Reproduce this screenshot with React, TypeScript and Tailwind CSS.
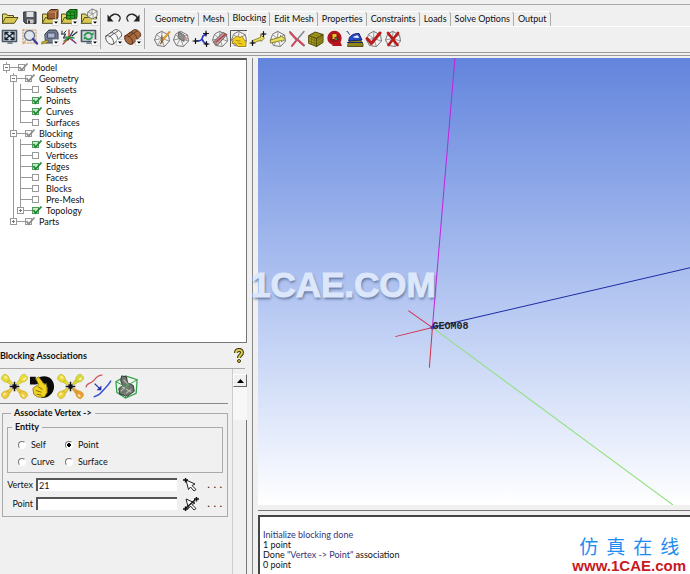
import { useState } from 'react';
import type { ReactNode } from 'react';
import clsx from 'clsx';

type IconProps = { label: string; children: ReactNode };

const ToolButton = ({ label, children }: IconProps) => (
  <button type="button" aria-label={label} className="block h-[18px] w-[18px] shrink-0">
    <svg viewBox="0 0 18 18" className="h-full w-full" fill="none" strokeLinecap="round" strokeLinejoin="round">
      {children}
    </svg>
  </button>
);

const DropMark = () => (
  <>
    <rect x="12" y="11.500" width="6" height="6" fill="#fff" stroke="#bbb" strokeWidth=".5" />
    <path d="M13 13.500h4l-2 2.200z" fill="#000" />
  </>
);

const Folder = () => (
  <>
    <path d="M1.500 15V6h4l1 1.500h6V10" fill="#e4d56a" stroke="#55501a" />
    <path d="M1.500 15l3-5.500h12.500l-3.500 5.500z" fill="#d9c850" stroke="#55501a" />
  </>
);

const WireBlock = () => (
  <>
    <path d="M9 1.500l6.500 3.500 1 6-5 5.500-7-1L1.500 10l2-5.500z" fill="#f4f4f4" stroke="#777" />
    <path d="M3.500 4.500l5 4L9 1.500M8.500 8.500l7-3.500M8.500 8.500l-7 1.500M8.500 8.500l-4 7M8.500 8.500l3 8M8.500 8.500l8 2.500" stroke="#8a8a8a" strokeWidth=".9" />
  </>
);

const Plus = ({ x, y }: { x: number; y: number }) => (
  <path
    d={`M${x - 2.5} ${y}h5M${x} ${y - 2.5}v5M${x - 0.5} ${y - 0.5}h1v1h-1z`}
    stroke="#111"
    strokeWidth="1.200"
  />
);

const Monitor = () => (
  <>
    <path d="M1.500 2.500h14v11h-14z" fill="#d5dce4" stroke="#4a5663" strokeWidth="1.600" />
    <path d="M6 16h6l-1-2H7z" fill="#7c8894" />
  </>
);

const fileTools = (
  <>
    <ToolButton label="Open project"><Folder /></ToolButton>
    <ToolButton label="Save project">
      <path d="M3 4h12v11.500H4.500L3 14z" fill="#55585c" stroke="#2c2e30" />
      <path d="M5.500 4h7v5h-7z" fill="#dfe2e4" />
      <path d="M6 11.500h6.500v4H6z" fill="#c8cccf" />
      <path d="M7 12.500h2v3H7z" fill="#333" />
    </ToolButton>
    <ToolButton label="Geometry">
      <Folder />
      <path d="M7 4l3-2.500h7v7L14.500 11H7z" fill="#9a5f36" stroke="#4c2c14" />
      <path d="M7 4h7.500v7M14.500 4L17 1.500" stroke="#d0976b" />
      <DropMark />
    </ToolButton>
    <ToolButton label="Mesh">
      <Folder />
      <path d="M7 4l3-2.500h7v7L14.500 11H7z" fill="#22a022" stroke="#0a4b0a" />
      <path d="M7 4h7.500v7M14.500 4L17 1.500M10.500 4v7M7 7.500h7.500L17 5" stroke="#0c5d0c" strokeWidth=".8" />
      <DropMark />
    </ToolButton>
    <ToolButton label="Blocking files">
      <Folder />
      <path d="M8 4l4-3 5 2v5l-4 3-5-2z" fill="#f5f5f0" stroke="#777" />
      <path d="M8 4l5 2v5M13 6l4-3M12 1v5l-4 3" stroke="#888" strokeWidth=".8" />
      <DropMark />
    </ToolButton>
  </>
);

const viewTools = (
  <>
    <ToolButton label="Fit window">
      <Monitor />
      <path d="M4.500 5l8 6M12.500 5l-8 6M4 7V4.500h3M10 4.500h3V7M13 9v2.500h-3M7 11.500H4V9" stroke="#14202c" strokeWidth="1.300" />
    </ToolButton>
    <ToolButton label="Box zoom">
      <path d="M2 2h13v13H2z" stroke="#c78a5a" strokeWidth=".9" strokeDasharray="1.500 1.500" />
      <circle cx="8.500" cy="7.500" r="5" fill="#dde6ee" stroke="#666e80" strokeWidth="1.300" />
      <path d="M12 11l4 4.500" stroke="#3f3f9c" strokeWidth="2.400" />
      <path d="M5 12l-3 4" stroke="#d7902a" />
    </ToolButton>
    <ToolButton label="Measure distance">
      <path d="M4 6l4-4h7l2 3v8l-3 2H5z" fill="#727b91" stroke="#3b4154" />
      <path d="M7 5h7v5H7z" fill="#aab5cf" stroke="#3b4154" strokeWidth=".8" />
      <path d="M1 14l6-2v2.500l-6 1.500z" fill="#c8b834" stroke="#665c10" strokeWidth=".6" />
      <DropMark />
    </ToolButton>
    <ToolButton label="Local coordinate system">
      <path d="M9 2v8l7 5M9 10l-6 6" stroke="#c0392b" strokeWidth="1.300" />
      <path d="M1.500 6h4l-2 4h4M13 3l-5 9M12 8l5-4" stroke="#27313d" strokeWidth="1.200" />
      <path d="M6 9l8 1M4 13l4-3" stroke="#2f8e3c" strokeWidth="1.300" />
      <path d="M12 11l3 4" stroke="#4250c8" />
      <path d="M2 3v3M6 3l-2 2" stroke="#27313d" />
    </ToolButton>
    <ToolButton label="Refresh">
      <Monitor />
      <path d="M4.500 7.500c1-3 5-3.500 7-1.200M12 9c-1 2.800-4.500 3.200-6.500 1" stroke="#269246" strokeWidth="1.700" />
      <path d="M10 7.500h3.500V4zM7 8.800H3.800V12z" fill="#269246" />
      <DropMark />
    </ToolButton>
  </>
);

const Cylinder = ({ fill, stroke }: { fill: string; stroke: string }) => (
  <>
    <path d="M1 8L9.500 2c3.500-1.500 8 2.500 7 6L8.500 16C4.500 18-1 12 1 8z" fill={fill} stroke={stroke} />
    <path d="M1 8c3-2.500 9 3.500 7.500 8M5.500 5c3-2 8.500 3 7 7M4 9l9-6" stroke={stroke} strokeWidth=".9" />
  </>
);

const blockingTools: { label: string; art: ReactNode }[] = [
  {
    label: 'Create block',
    art: (
      <>
        <WireBlock />
        <path d="M9 11l7.500-9" stroke="#dd9a2c" strokeWidth="2" />
        <path d="M9 11l-1.500 3M9 6v7" stroke="#6b4b16" />
      </>
    ),
  },
  {
    label: 'Split block',
    art: (
      <>
        <WireBlock />
        <path d="M7 2l5.500 3.500-.500 6L6.500 8z" fill="#8f8f8f" stroke="#666" />
        <path d="M12.500 6l4 2.500-4 3z" fill="#c49a9a" />
      </>
    ),
  },
  {
    label: 'Merge vertices',
    art: (
      <>
        <path d="M5 11c4 0 5-1 6-5l3-2M10 9c1 3 2 4 5 5" stroke="#2c36c0" strokeWidth="1.600" />
        <Plus x={3.500} y={11} />
        <Plus x={14} y={3.500} />
        <Plus x={14.500} y={14} />
      </>
    ),
  },
  {
    label: 'Edit block',
    art: (
      <>
        <WireBlock />
        <path d="M2.500 12L12 2.500l4 2L6.500 15z" fill="#b9a6a6" stroke="#6d5555" />
        <path d="M5 12l9-7.500" stroke="#c1353b" strokeWidth="1.500" />
      </>
    ),
  },
  {
    label: 'Associate',
    art: (
      <>
        <path d="M.5 17.500V.5h17" stroke="#555" />
        <path d="M17.500.5v17H.5" stroke="#fff" />
        <WireBlock />
        <path d="M3 9l4-3 3 1.500L12 6l1.500 3 2.500 3v4.500H8L5 13l-3 .5 1-2.500z" fill="#f3cf1f" stroke="#9c7a08" strokeWidth=".8" />
        <path d="M6 10.500l4 .5M8 13l4 1" stroke="#9c7a08" strokeWidth=".8" />
      </>
    ),
  },
  {
    label: 'Move vertex',
    art: (
      <>
        <path d="M3.500 10.500l8-3V5l4 3-3.500 3.500V10l-8 3z" fill="#e8e05a" stroke="#77701a" strokeWidth=".8" />
        <Plus x={3.500} y={13} />
        <Plus x={14.500} y={4} />
      </>
    ),
  },
  {
    label: 'Transform blocks',
    art: (
      <>
        <WireBlock />
        <path d="M1.500 10l10-3V5.500l4.500 3L12.500 12v-1.500L2 13z" fill="#e8e05a" stroke="#77701a" strokeWidth=".8" />
      </>
    ),
  },
  {
    label: 'Edit edge',
    art: (
      <>
        <path d="M2 2l6 6.500 8 7" stroke="#59626b" strokeWidth="1.800" />
        <path d="M16 1.500L9.500 9 4 15.500" stroke="#7f8890" strokeWidth="1.500" />
        <path d="M2.500 3L8 9M10 10l5.500 5M8 11l-4 5" stroke="#d04a5c" strokeWidth="2" />
      </>
    ),
  },
  {
    label: 'Pre-mesh params',
    art: (
      <>
        <path d="M2 5.500l6-3.500 8 2.500v8L9.500 16.500 2 13.500z" fill="#a59a1c" stroke="#4c4708" />
        <path d="M2 5.500l7.500 3v8M9.500 8.500l6.500-4" stroke="#4c4708" strokeWidth="1.100" />
        <path d="M2 8l7.500 3 6.500-4M2 11l7.500 3 6.500-4M4.500 6.500v8M7 7.500v8M12 7v8M14 6v7.500M5 4l8 2.500" stroke="#6f6810" strokeWidth=".7" />
      </>
    ),
  },
  {
    label: 'Pre-mesh quality',
    art: (
      <>
        <circle cx="8.500" cy="8" r="5.800" fill="#8a1a1a" stroke="#b3141e" strokeWidth="2.800" />
        <path d="M6.500 4h4v3h-2v2h-2z" fill="#ddc522" />
        <path d="M9 8h2v2H9z" fill="#2f8e3c" />
        <path d="M9 11h5l2 5H6z" fill="#b3141e" />
      </>
    ),
  },
  {
    label: 'Pre-mesh smooth',
    art: (
      <>
        <path d="M2 14l3-6h8l4 6v2.500H2z" fill="#8d8616" stroke="#3d3a08" strokeWidth=".8" />
        <path d="M3 9c1-4 5-5.500 10-5.500L16 10l-13 1z" fill="#2748c8" stroke="#13226c" />
        <path d="M7 7.500c1-1.500 3-2 5-2l1 2.500z" fill="#f1f3fb" />
        <path d="M1 1.500c2 0 1 2 2.500 3M1.500 12.500h15" stroke="#1d2a6c" />
      </>
    ),
  },
  {
    label: 'Check blocks',
    art: (
      <>
        <WireBlock />
        <path d="M2 8.500l4.500 5L15 3" stroke="#b91c1c" strokeWidth="3" />
      </>
    ),
  },
  {
    label: 'Delete block',
    art: (
      <>
        <WireBlock />
        <path d="M4 3l9.500 12M14 3L4.500 15" stroke="#b91c1c" strokeWidth="2.800" />
      </>
    ),
  },
];

const tabs = ['Geometry', 'Mesh', 'Blocking', 'Edit Mesh', 'Properties', 'Constraints', 'Loads', 'Solve Options', 'Output'];

type Node = { name: string; level: number; state: 'on' | 'off' | 'partial'; expander?: '-' | '+'; last?: boolean };

const nodes: Node[] = [
  { name: 'Model', level: 0, state: 'partial', expander: '-' },
  { name: 'Geometry', level: 1, state: 'partial', expander: '-' },
  { name: 'Subsets', level: 2, state: 'off' },
  { name: 'Points', level: 2, state: 'on' },
  { name: 'Curves', level: 2, state: 'on' },
  { name: 'Surfaces', level: 2, state: 'off', last: true },
  { name: 'Blocking', level: 1, state: 'partial', expander: '-' },
  { name: 'Subsets', level: 2, state: 'on' },
  { name: 'Vertices', level: 2, state: 'off' },
  { name: 'Edges', level: 2, state: 'on' },
  { name: 'Faces', level: 2, state: 'off' },
  { name: 'Blocks', level: 2, state: 'off' },
  { name: 'Pre-Mesh', level: 2, state: 'off' },
  { name: 'Topology', level: 2, state: 'on', expander: '+', last: true },
  { name: 'Parts', level: 1, state: 'partial', expander: '+', last: true },
];

function TreeRow({ node }: { node: Node }) {
  const [checked, setChecked] = useState(node.state !== 'off');
  const partial = node.state === 'partial';

  return (
    <li className="flex h-[11px] items-center">
      {node.level > 0 && <span className="w-[7px]" />}
      {node.level > 1 && (
        <span className="flex h-full w-[7px] justify-center">
          <span className="w-px bg-[#999]" />
        </span>
      )}
      <span className="grid h-full w-[7px] place-items-center">
        <span className={clsx('col-start-1 row-start-1 w-px bg-[#999]', node.last ? 'h-1/2 self-start' : 'h-full')} />
        {node.expander ? (
          <button
            type="button"
            aria-label={node.expander === '-' ? `Collapse ${node.name}` : `Expand ${node.name}`}
            className="z-10 col-start-1 row-start-1 grid h-[7px] w-[7px] place-items-center border border-[#999] bg-white"
          >
            <svg viewBox="0 0 5 5" className="h-[5px] w-[5px]" stroke="#777">
              <path d={node.expander === '-' ? 'M1 2.500h3' : 'M1 2.500h3M2.500 1v3'} />
            </svg>
          </button>
        ) : (
          <span className="col-start-1 row-start-1 h-px w-[3px] justify-self-end bg-[#999]" />
        )}
      </span>
      <span className="h-px w-[8px] bg-[#999]" />
      <label className="flex items-center">
        <span className="grid h-[11px] w-[11px]">
          <input
            type="checkbox"
            checked={checked}
            onChange={() => setChecked(!checked)}
            className={clsx(
              'col-start-1 row-start-1 h-[7px] w-[7px] appearance-none self-center border',
              !partial && checked ? 'border-[#4f9a5a] bg-[#cfe8cf]' : 'border-[#999] bg-white',
            )}
          />
          {checked && (
            <svg viewBox="0 0 11 11" className="pointer-events-none col-start-1 row-start-1" fill="none">
              <path d="M1.500 5l2 3L9.500 1.500" stroke={partial ? '#8c8c8c' : '#1f8a34'} strokeWidth="1.800" />
            </svg>
          )}
        </span>
        <span className="pl-[3px]">{node.name}</span>
      </label>
    </li>
  );
}

const Finger = ({ rotate, fill }: { rotate: number; fill: string }) => (
  <g transform={`rotate(${rotate} 14 14)`}>
    <path d="M13 10.500L12 5c-2-2-2.200-6 0-7.500h4c2.200 1.500 2 5.500 0 7.500l-1 5.500z" fill={fill} stroke="#b3a41c" strokeWidth=".5" />
    <path d="M13 5.500h2" stroke="#8a8314" strokeWidth=".6" />
    <ellipse cx="15" cy="1" rx="1" ry="1.800" fill="#fbf6b4" />
  </g>
);

const Spark = () => <path d="M14 9v10M9 14h10M12 12l4 4M16 12l-4 4" stroke="#111" strokeWidth="1.500" />;

const associations: { label: string; art: ReactNode }[] = [
  {
    label: 'Associate vertex',
    art: (
      <>
        <Finger rotate={-48} fill="#e8dc34" />
        <Finger rotate={48} fill="#ecdf3c" />
        <Finger rotate={132} fill="#f0c93c" />
        <Finger rotate={228} fill="#f0c93c" />
        <Spark />
      </>
    ),
  },
  {
    label: 'Associate edge to curve',
    art: (
      <>
        <path d="M1 4h6v3c8-7 19-3 19 7 0 7-6 12-12 12l-5-3 9-3c3-5 0-10-6-10L7 12H1z" fill="#0b0b0b" />
        <path d="M7 6l3-2 6 8 2-1 1 9-3 5H9l-4-3-1-6 4-3 2-1z" fill="#f3d321" stroke="#7b6907" strokeWidth=".8" />
        <path d="M9 14l5 3M7 18l6 2M8 22l5 1" stroke="#7b6907" />
      </>
    ),
  },
  {
    label: 'Associate edge to surface',
    art: (
      <>
        <Finger rotate={-48} fill="#e8dc34" />
        <Finger rotate={48} fill="#d6d93a" />
        <Finger rotate={132} fill="#ef9a35" />
        <Finger rotate={228} fill="#ecd03c" />
        <Spark />
      </>
    ),
  },
  {
    label: 'Associate face to surface',
    art: (
      <>
        <path d="M1 15c1-6 5-3 8-7s4-5 9-6" stroke="#d0555a" strokeWidth="1.200" />
        <path d="M9 25c3-2 5-1 8-5s6-5 10-12" stroke="#3551d6" strokeWidth="1.500" />
        <path d="M10 11l5 5" stroke="#2330a8" strokeWidth="1.300" />
        <path d="M17 13v5h-5z" fill="#2330a8" />
      </>
    ),
  },
  {
    label: 'Snap project vertices',
    art: (
      <>
        <path d="M3 9l10-6 12 4-1 14-11 5L4 20z" fill="#eef3ec" stroke="#2fa04a" strokeWidth="1.300" />
        <path d="M9 3l5 1 1 6 6 3 1 6-7 5-8-2-1-6 4-3-2-5z" fill="#70756e" stroke="#333" />
        <path d="M9 14l10 6M8 19l9-8M11 7l4 4M12 22l7-5" stroke="#b8bdb6" strokeWidth="1.200" />
        <path d="M3 9l10 5 12-7M13 14v12" stroke="#2fa04a" />
      </>
    ),
  },
];

const PickArrow = ({ double }: { double?: boolean }) => (
  <svg viewBox="0 0 16 14" className="h-[14px] w-4" fill="none">
    <path d="M3 2l9 4-3 1.500 4 4-2 1.500-3.500-4-2 2.500z" fill="#fff" stroke="#222" />
    {double ? (
      <path d="M0 12h5M2.500 9.500v5M11 2h5M13.500 0v4.500M3 11l9-8" stroke="#111" strokeWidth="1.500" />
    ) : (
      <path d="M0 2h5M2.500 0v4.500" stroke="#111" strokeWidth="1.300" />
    )}
  </svg>
);

function PickRow({ label, initial, double }: { label: string; initial: string; double?: boolean }) {
  const [value, setValue] = useState(initial);
  const id = `pick-${label.toLowerCase()}`;

  return (
    <div className="flex h-[19px] items-center">
      <label htmlFor={id} className="w-[26px] text-right">{label}</label>
      <input
        id={id}
        type="text"
        value={value}
        onChange={(e) => setValue(e.target.value)}
        className="ml-[3px] h-[13px] w-0 flex-1 border-t-2 border-l-2 border-[#555] bg-white pl-px outline-none"
      />
      <button type="button" aria-label={`Select ${label}`} className="ml-[6px]">
        <PickArrow double={double} />
      </button>
      <button
        type="button"
        aria-label={`More ${label} options`}
        className="flex w-6 justify-end gap-1 pr-px font-bold"
      >
        <span>.</span><span>.</span><span>.</span>
      </button>
    </div>
  );
}

function AssociationPanel() {
  const [entity, setEntity] = useState('Point');

  return (
    <div className="flex flex-1">
      <div className="min-w-0 flex-1 pt-1 pr-[4px]">
        <div className="flex gap-px border-b border-[#888] pb-[3px] pl-px">
          {associations.map((item) => (
            <button key={item.label} type="button" aria-label={item.label} className="h-[27px] w-[27px]">
              <svg viewBox="0 0 28 28" className="h-full w-full" fill="none">{item.art}</svg>
            </button>
          ))}
        </div>
        <fieldset className="mt-[3px] ml-[2px] min-w-0 border border-[#aaa] px-1 pb-[3px]">
          <legend className="ml-1 px-[3px] leading-[12px] font-bold">Associate Vertex -&gt;</legend>
          <fieldset className="mt-[2px] min-w-0 border border-[#aaa] px-[10px] pt-[3px] pb-[2px]">
            <legend className="-ml-[6px] px-[3px] leading-[12px] font-bold">Entity</legend>
            <div className="grid grid-cols-[47px_1fr]">
              {['Self', 'Point', 'Curve', 'Surface'].map((name) => (
                <label key={name} className="flex h-[17px] items-center gap-[5px]">
                  <input
                    type="radio"
                    name="entity"
                    checked={entity === name}
                    onChange={() => setEntity(name)}
                    className="h-2 w-2 appearance-none rounded-full border border-[#777] border-r-white border-b-white bg-white checked:bg-[radial-gradient(#000_45%,#fff_50%)]"
                  />
                  {name}
                </label>
              ))}
            </div>
          </fieldset>
          <div className="pt-[2px]">
            <PickRow label="Vertex" initial="21" />
            <PickRow label="Point" initial="" double />
          </div>
        </fieldset>
      </div>
      <div className="flex w-[15px] flex-col border-l border-[#ccc] pt-[5px]">
        <button
          type="button"
          aria-label="Scroll up"
          className="grid h-[13px] place-items-center border border-white border-r-[#666] border-b-[#666] bg-[#f0f0f0]"
        >
          <svg viewBox="0 0 7 4" className="h-1 w-[7px]"><path d="M0 4l3.500-4L7 4z" /></svg>
        </button>
        <div className="h-[33px] bg-[#f7f7f7]" />
        <div className="flex-1 border-r border-[#777]" />
      </div>
    </div>
  );
}

function Viewport() {
  return (
    <div className="relative min-h-0 flex-1 bg-linear-to-b from-[#6384dc] to-white">
      <svg
        viewBox="0 0 432 446"
        preserveAspectRatio="xMinYMin slice"
        className="absolute inset-0 h-full w-full"
        fill="none"
        fontFamily="'Liberation Mono', monospace"
        fontSize="10"
      >
        <path d="M196.500 0L174 269" stroke="#c322dc" />
        <path d="M174 269L432 209" stroke="#1c2ca4" />
        <path d="M174 269L414 446" stroke="#8fe07a" />
        <path d="M150 252l24 17M137 278l37-9M171 309l3-40" stroke="#d2304c" />
        <circle cx="174" cy="269" r="2" fill="#4a3bc4" />
        <text x="174" y="270" fill="#222" fontWeight="bold">GEOM08</text>
      </svg>
      <div className="absolute top-[207px] -left-[7px] text-[35px] leading-10 font-bold font-['Liberation_Sans',sans-serif] text-[#dce7fb] [-webkit-text-stroke:1px_#dce7fb] [text-shadow:1px_2px_3px_#5a6c96]">
        1CAE.COM
      </div>
    </div>
  );
}

export default function App() {
  const [activeTab, setActiveTab] = useState('Blocking');

  return (
    <div className="flex h-screen min-h-[574px] flex-col bg-[#f0f0f0] font-['Lato','Liberation_Sans',sans-serif] text-[9px] leading-[11px] text-[#111]">
      <header className="flex shrink-0 border-b border-[#999] pt-1">
        <div className="flex flex-1 border-t border-[#aaa] pt-1 pb-1">
          <div className="my-[-1px] border-r border-[#aaa] pr-[2px] pl-px">
            <div className="flex w-[97px] justify-between pb-[2px]">{fileTools}</div>
            <div className="flex w-[97px] justify-between">{viewTools}</div>
          </div>
          <div className="my-[-1px] grid grid-cols-2 content-start gap-x-px gap-y-[2px] border-r border-[#aaa] pr-[2px] pl-[4px]">
            <ToolButton label="Undo">
              <path d="M4 11c2-5 8-7 11-2 .5 1.500 0 3-1 4" stroke="#222" strokeWidth="1.300" />
              <path d="M2.500 6.500v7h6z" fill="#222" />
            </ToolButton>
            <ToolButton label="Redo">
              <path d="M14 11C12 6 6 4 3 9c-.5 1.500 0 3 1 4" stroke="#222" strokeWidth="1.300" />
              <path d="M15.500 6.500v7h-6z" fill="#222" />
            </ToolButton>
            <ToolButton label="Wireframe">
              <Cylinder fill="#f8f8f8" stroke="#555" />
              <DropMark />
            </ToolButton>
            <ToolButton label="Solid">
              <Cylinder fill="#a8693f" stroke="#55301a" />
              <DropMark />
            </ToolButton>
          </div>
          <div className="flex flex-1 flex-col pl-[6px]">
            <nav role="tablist" className="flex items-end border-b border-white pt-[2px]">
              {tabs.map((tab) => (
                <button
                  key={tab}
                  type="button"
                  role="tab"
                  aria-selected={tab === activeTab}
                  onClick={() => setActiveTab(tab)}
                  className={clsx(
                    'rounded-tr-sm border-t border-r border-t-white border-r-[#aaa] pr-[3px] pl-1 whitespace-nowrap',
                    tab === activeTab ? 'pb-[3px]' : 'pt-px pb-[2px]',
                  )}
                >
                  {tab}
                </button>
              ))}
            </nav>
            <div className="flex w-[251px] justify-between pt-[3px] pl-[2px]">
              {blockingTools.map((tool) => (
                <ToolButton key={tool.label} label={tool.label}>{tool.art}</ToolButton>
              ))}
            </div>
          </div>
        </div>
      </header>

      <div className="mt-[2px] flex min-h-0 flex-1 border-t border-[#999] pt-[2px]">
        <aside className="flex w-[247px] shrink-0 flex-col">
          <div className="h-[285px] overflow-hidden border-t-2 border-r border-b border-t-[#555] border-r-[#777] border-b-[#777] bg-white pt-[2px] pl-[3px]">
            <ul>
              {nodes.map((node, i) => (
                <TreeRow key={i} node={node} />
              ))}
            </ul>
          </div>
          <div className="mr-[2px] flex h-[26px] items-center justify-between border-b border-[#aaa]">
            <h2 className="font-bold">Blocking Associations</h2>
            <button type="button" aria-label="Help">
              <svg viewBox="0 0 12 16" className="h-4 w-3" fill="none">
                <path d="M3 5c0-4 6-4 6-.5C9 7 6 7 6 10" stroke="#3d3510" strokeWidth="4" />
                <path d="M3 5c0-4 6-4 6-.5C9 7 6 7 6 10" stroke="#dccb4c" strokeWidth="2" />
                <circle cx="6" cy="13" r="1.500" fill="#dccb4c" stroke="#3d3510" />
              </svg>
            </button>
          </div>
          <AssociationPanel />
        </aside>

        <div className="w-[11px] shrink-0 border-r-[5px] border-[#f0f0f0]">
          <div className="h-full border-r border-[#888]" />
        </div>

        <main className="flex min-w-0 flex-1 flex-col">
          <Viewport />
          <div className="h-[10px] shrink-0 border-b-[4px] border-[#f0f0f0]">
            <div className="h-full border-b border-[#777]" />
          </div>
          <section className="flex shrink-0 items-end justify-between border-t-2 border-l-2 border-[#444] bg-white pt-[13px] pr-1">
            <div className="pb-1 pl-[3px] leading-[10px]">
              <p className="text-[#33337a]">Initialize blocking done</p>
              <p>1 point</p>
              <p>Done <span className="text-[#33337a]">"Vertex -&gt; Point"</span> association</p>
              <p>0 point</p>
            </div>
            <div className="flex flex-col items-center pb-px font-['Liberation_Sans','Noto_Sans_CJK_SC',sans-serif]">
              <div lang="zh-CN" className="flex gap-2 text-[19px] leading-[22px] text-[#1e8df0]">
                <span>仿</span><span>真</span><span>在</span><span>线</span>
              </div>
              <a href="#home" className="text-[15px] leading-[14px] font-bold text-[#c8191e]">www.1CAE.com</a>
            </div>
          </section>
        </main>
      </div>
    </div>
  );
}
